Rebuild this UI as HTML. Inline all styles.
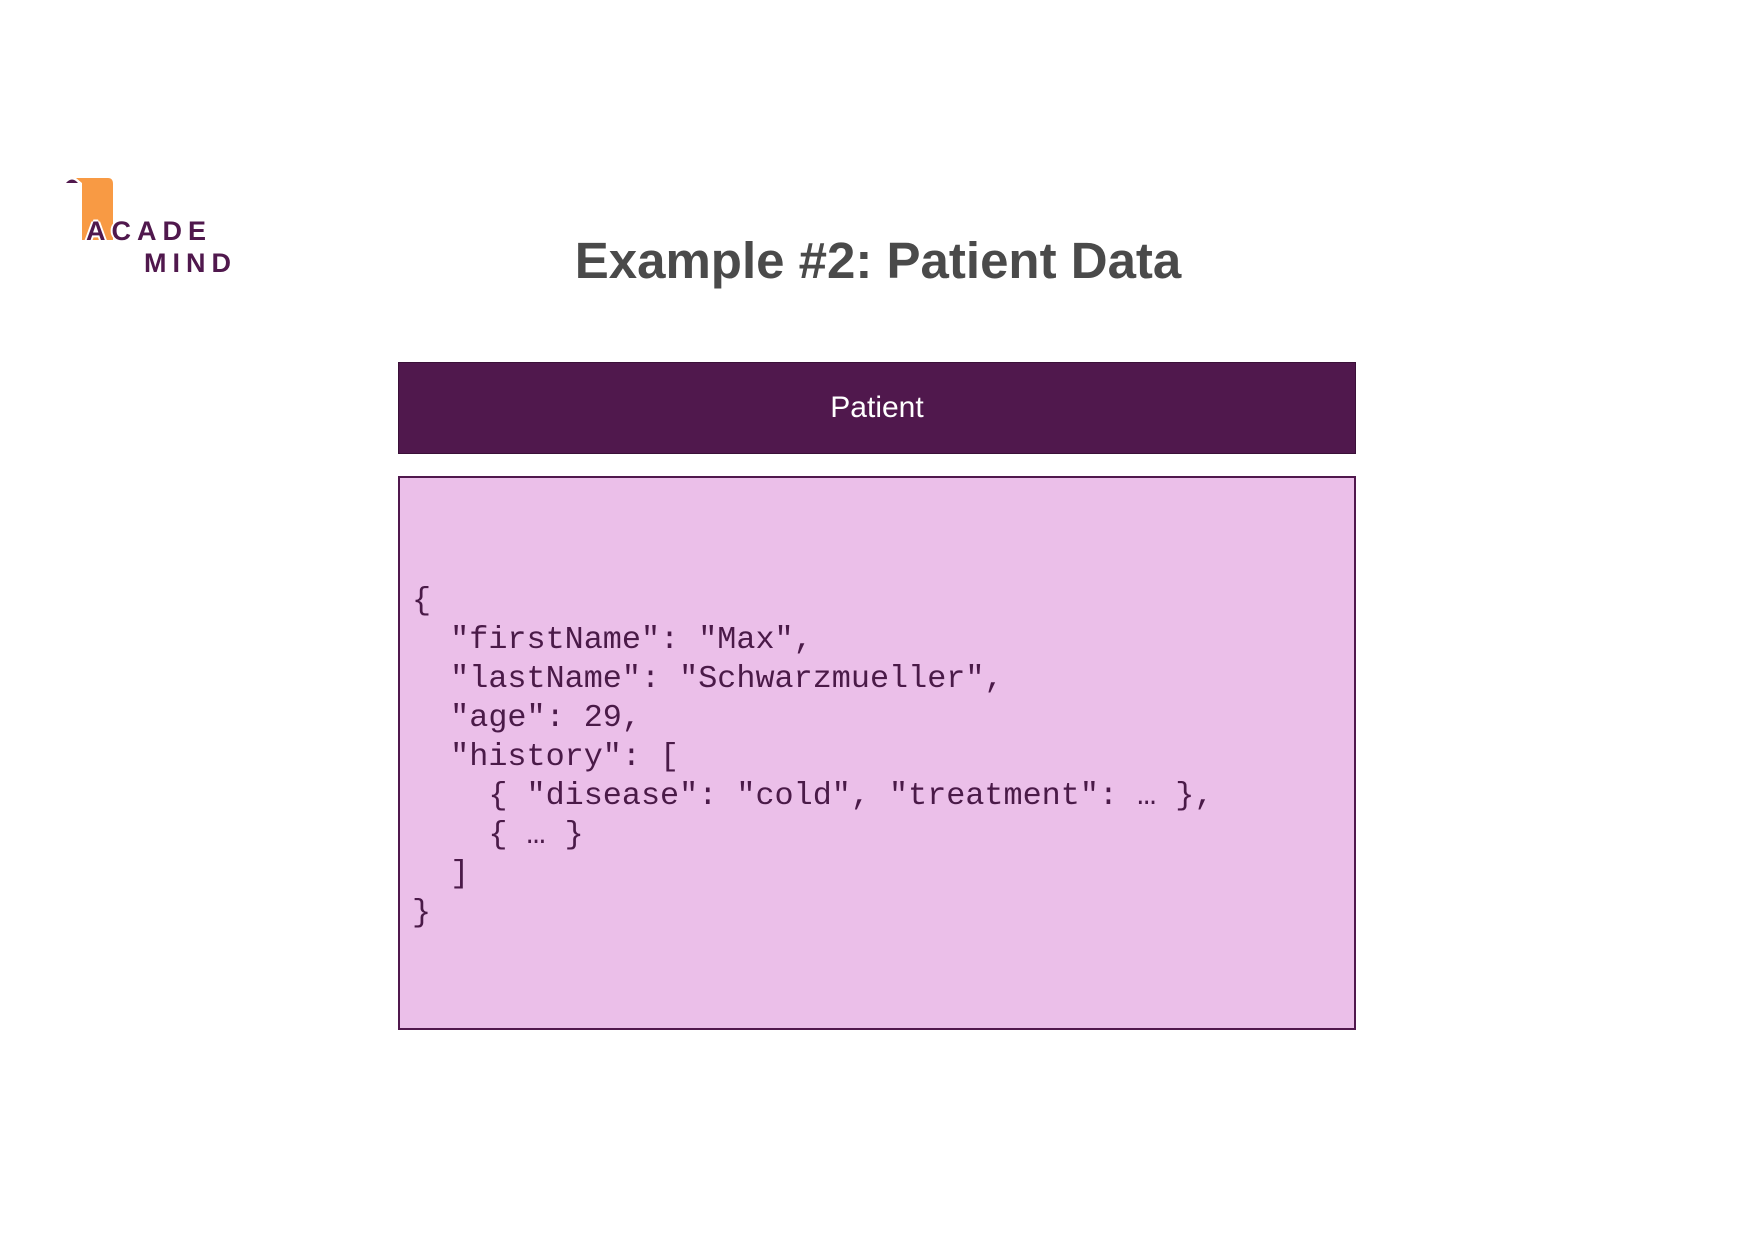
<!DOCTYPE html>
<html><head><meta charset="utf-8"><style>
body{margin:0;width:1754px;height:1240px;background:#fff;position:relative;overflow:hidden;font-family:"Liberation Sans",sans-serif}
.title{position:absolute;left:0;width:1756px;top:231px;text-align:center;font-size:51px;font-weight:bold;color:#4a4a4a}
.hdr{position:absolute;left:398px;top:362px;width:956px;height:90px;background:#50184d;border:1px solid #3a1038;color:#fff;font-size:30px;text-align:center;line-height:90px}
.box{position:absolute;left:398px;top:476px;width:954px;height:550px;background:#ebbfe9;border:2px solid #50184d}
pre{position:absolute;left:12px;top:104px;margin:0;font-family:"Liberation Mono",monospace;font-size:31.8px;line-height:39px;color:#4a1a48}
.logo{position:absolute;font-weight:bold;color:#50184d;font-size:27px;letter-spacing:6px;text-shadow:-2px 0 #fff,2px 0 #fff,0 -2px #fff,0 2px #fff}
</style></head><body>
<svg style="position:absolute;left:64px;top:176px" width="56" height="68">
<path d="M2 7 Q8 0 14 7 Z" fill="#50184d"/>
<path d="M12 2 H44 Q49 2 49 8 V64 H18 V7 Z" fill="#f89a44"/>
</svg>
<div class="logo" style="left:86px;top:216px">ACADE</div>
<div class="logo" style="left:144px;top:248px">MIND</div>
<div class="title">Example #2: Patient Data</div>
<div class="hdr">Patient</div>
<div class="box"><pre>{
  "firstName": "Max",
  "lastName": "Schwarzmueller",
  "age": 29,
  "history": [
    { "disease": "cold", "treatment": … },
    { … }
  ]
}</pre></div>
</body></html>
